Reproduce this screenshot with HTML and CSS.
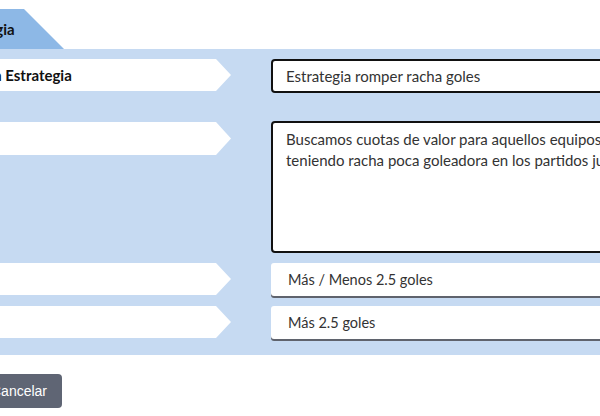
FILE: index.html
```html
<!DOCTYPE html>
<html lang="es">
<head>
<meta charset="utf-8">
<link rel="stylesheet" href="styles.css">
</head>
<body>
<div class="page">
  <div class="tabs">
    <div class="tab">Estrategia</div>
  </div>
  <div class="panel">
    <div class="row row-name">
      <div class="label">Nombre de la Estrategia</div>
      <input class="field input" type="text" value="Estrategia romper racha goles">
    </div>
    <div class="row row-desc">
      <div class="label">Descripción</div>
      <textarea class="field textarea">Buscamos cuotas de valor para aquellos equipos que vienen
teniendo racha poca goleadora en los partidos jugados hasta ahora.</textarea>
    </div>
    <div class="row row-sel">
      <div class="label">Mercado</div>
      <div class="select">Más / Menos 2.5 goles</div>
    </div>
    <div class="row row-sel">
      <div class="label">Selección</div>
      <div class="select">Más 2.5 goles</div>
    </div>
  </div>
  <div class="actions">
    <button class="btn" type="button">Cancelar</button>
  </div>
</div>
</body>
</html>
```
FILE: styles.css
```css
html, body {
  margin: 0;
  padding: 0;
  background: #fff;
  overflow: hidden;
}
body {
  font-family: Lato, "Noto Sans", sans-serif;
  color: #333;
}
.page {
  margin-left: -130px;
  width: 1030px;
}
.tabs {
  padding-top: 9px;
  display: flex;
}
.tab {
  width: 194px;
  height: 40px;
  box-sizing: border-box;
  background: #8db8e6;
  clip-path: polygon(0 0, 154px 0, 100% 100%, 0 100%);
  font-weight: 700;
  font-size: 15px;
  line-height: 40px;
  color: #111;
  padding-left: 78px;
}
.panel {
  background: #c6daf2;
  padding: 10px 0 16px;
  display: flex;
  flex-direction: column;
}
.row {
  display: flex;
  align-items: flex-start;
  gap: 40px;
}
.row-desc {
  margin-top: 28px;
}
.row-sel {
  margin-top: 10px;
}
.label {
  width: 361px;
  height: 32px;
  flex: none;
  box-sizing: border-box;
  background: #fff;
  clip-path: polygon(0 0, calc(100% - 15px) 0, 100% 50%, calc(100% - 15px) 100%, 0 100%);
  font-weight: 700;
  font-size: 15px;
  line-height: 32px;
  color: #111;
  padding-left: 42px;
}
.row-desc .label {
  margin-top: 1px;
  height: 33px;
}
.field {
  flex: 1;
  box-sizing: border-box;
  border: 2px solid #111;
  border-radius: 4px;
  background: #fff;
  font-family: Lato, "Noto Sans", sans-serif;
  font-size: 15px;
  color: #333;
  margin: 0;
  outline: none;
}
.input {
  height: 34px;
  padding: 0 13px;
}
.textarea {
  height: 132px;
  padding: 6px 13px;
  line-height: 21px;
  resize: none;
  overflow: hidden;
}
.select {
  flex: 1;
  height: 33px;
  box-sizing: border-box;
  background: #fff;
  border-radius: 3px;
  box-shadow: 0 2px 0 #5f636d;
  font-size: 14.5px;
  line-height: 33px;
  padding-left: 17px;
  color: #333;
}
.actions {
  padding-top: 19px;
  padding-left: 106px;
}
.btn {
  height: 34px;
  border: none;
  border-radius: 4px;
  background: #5f6574;
  color: #fff;
  font-family: "Liberation Sans", Arial, sans-serif;
  font-size: 14px;
  padding: 0 15px;
}
```
